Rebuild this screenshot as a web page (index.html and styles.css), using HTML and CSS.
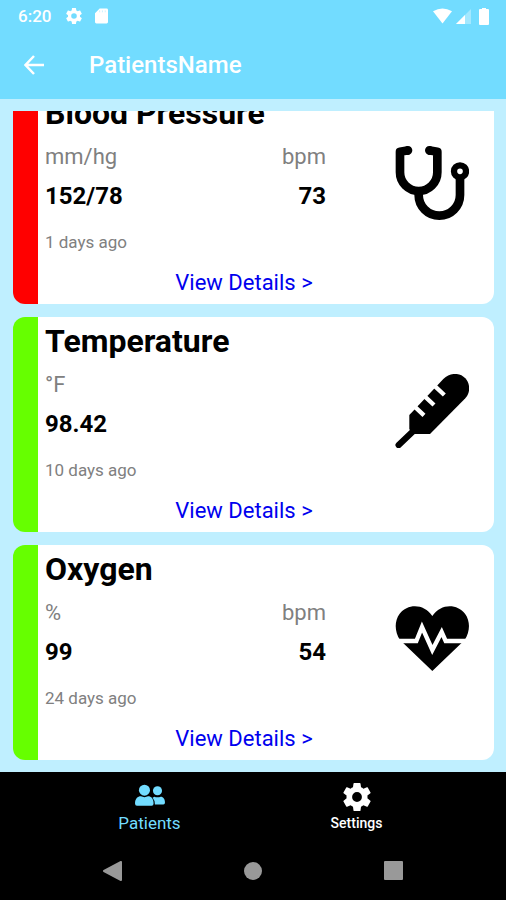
FILE: index.html
```
<!DOCTYPE html>
<html lang="en">
<head>
    <meta charset="UTF-8">
    <meta name="viewport" content="width=device-width, initial-scale=1.0">
    <title>PatientsName</title>
    <link rel="stylesheet" href="styles.css">
</head>
<body>
    <svg class="defs" aria-hidden="true">
        <symbol id="gear" viewBox="2 2 20 20">
            <path d="M12 15.5A3.5 3.5 0 0 1 8.5 12 3.5 3.5 0 0 1 12 8.5a3.5 3.5 0 0 1 3.5 3.5 3.5 3.5 0 0 1-3.5 3.5m7.43-2.53c.04-.32.07-.64.07-.97s-.03-.66-.07-1l2.11-1.63c.19-.15.24-.42.12-.64l-2-3.46c-.12-.22-.39-.31-.61-.22l-2.49 1c-.52-.39-1.06-.73-1.69-.98l-.37-2.65A.506.506 0 0 0 14 2h-4c-.25 0-.46.18-.5.42l-.37 2.65c-.63.25-1.17.59-1.69.98l-2.49-1c-.22-.09-.49 0-.61.22l-2 3.46c-.13.22-.07.49.12.64L4.57 11c-.04.34-.07.67-.07 1s.03.65.07.97l-2.11 1.66c-.19.15-.25.42-.12.64l2 3.46c.12.22.39.3.61.22l2.49-1.01c.52.4 1.06.74 1.69.99l.37 2.65c.04.24.25.42.5.42h4c.25 0 .46-.18.5-.42l.37-2.65c.63-.26 1.17-.59 1.69-.99l2.49 1.01c.22.08.49 0 .61-.22l2-3.46c.12-.22.07-.49-.12-.64z"/>
        </symbol>
    </svg>

    <div class="app">
        <header class="header">
            <div class="status-bar">
                <span class="time">6:20</span>
                <svg class="status-gear" width="16" height="16"><use href="#gear"/></svg>
                <svg class="status-sd" width="13" height="16" viewBox="0 0 14 16"><path d="M5 0h7.500a1.500 1.500 0 0 1 1.500 1.500v13a1.500 1.500 0 0 1-1.500 1.500h-11A1.500 1.500 0 0 1 0 14.500V5z"/><path d="M5 2v2M8 2v2M11 2v2" stroke="#72dcff" stroke-opacity=".4"/></svg>
                <svg class="status-wifi" width="19" height="16" viewBox="0 0 20 16"><path d="M0 3Q10-3 20 3L10 16z"/></svg>
                <svg class="status-signal" width="15" height="15" viewBox="0 0 15 15"><path d="M15 0v15H0z" opacity=".35"/><path d="M9 6v9H0z"/></svg>
                <svg width="10" height="17" viewBox="0 0 10 17"><path d="M3 0h4v1h2a1 1 0 0 1 1 1v14a1 1 0 0 1-1 1H1a1 1 0 0 1-1-1V2a1 1 0 0 1 1-1h2z"/></svg>
            </div>
            <div class="title-bar">
                <button class="back-button" aria-label="Back">
                    <svg width="20" height="20" viewBox="0 0 20 20"><path d="M20 10H2M10 1L1.500 10l8.500 9" fill="none" stroke="#fff" stroke-width="2.500"/></svg>
                </button>
                <h1>PatientsName</h1>
            </div>
        </header>

        <main class="content">
            <div class="card-list" id="card-list">
                <article class="card alert">
                    <div class="card-body">
                        <div class="readings">
                            <h2>Blood Pressure</h2>
                            <div class="row units"><span>mm/hg</span><span>bpm</span></div>
                            <div class="row values"><span>152/78</span><span>73</span></div>
                            <p class="age">1 days ago</p>
                        </div>
                        <svg class="card-icon" viewBox="45 48 222 222">
                            <g fill="none" stroke="#000" stroke-width="26" stroke-linejoin="round">
                                <path d="M86 61L60 65V127a56 56 0 0 0 112 0V65L146 61"/>
                                <path d="M84 61L83 62M148 61L149 62" stroke-linecap="round"/>
                                <path d="M116 186v9a62 62 0 0 0 124 0V135"/>
                                <circle cx="240" cy="124" r="18" stroke-width="19"/>
                            </g>
                        </svg>
                        <a href="#" class="details">View Details &gt;</a>
                    </div>
                </article>

                <article class="card normal">
                    <div class="card-body">
                        <div class="readings">
                            <h2>Temperature</h2>
                            <div class="row units"><span>°F</span></div>
                            <div class="row values"><span>98.42</span></div>
                            <p class="age">10 days ago</p>
                        </div>
                        <svg class="card-icon" viewBox="45 39 222 222">
                            <path d="M88 162L190 54C210 34 240 34 256 52C271 69 272 94 256 112L150 219H103L88 205z"/>
                            <path d="M56 252L104 206" stroke="#000" stroke-width="19" stroke-linecap="round"/>
                            <path d="M100 133L132 163M131 103L162 132M162 73L193 102" stroke="#fff" stroke-width="13"/>
                        </svg>
                        <a href="#" class="details">View Details &gt;</a>
                    </div>
                </article>

                <article class="card normal">
                    <div class="card-body">
                        <div class="readings">
                            <h2>Oxygen</h2>
                            <div class="row units"><span>%</span><span>bpm</span></div>
                            <div class="row values"><span>99</span><span>54</span></div>
                            <p class="age">24 days ago</p>
                        </div>
                        <svg class="card-icon" viewBox="45 36 222 222">
                            <path d="M157 243L60 150C44 126 42 94 59 71C83 40 132 40 157 78C182 40 231 40 255 71C272 94 270 126 254 150z"/>
                            <path d="M40 153H109L126 111L157 180L185 126L197 153H275" fill="none" stroke="#fff" stroke-width="13"/>
                        </svg>
                        <a href="#" class="details">View Details &gt;</a>
                    </div>
                </article>
            </div>
        </main>

        <nav class="tabs">
            <a href="#" class="tab active">
                <svg width="30" height="28" viewBox="403 66 92 86"><circle cx="432" cy="88" r="17"/><path d="M403 129c0-14 8-22 18-22q11 5 22 0c10 0 17 8 17 22q0 7-6 7h-45q-6 0-6-7z"/><circle cx="472" cy="90" r="14"/><path d="M457 111l5-3q10 4 20 0c8 0 13 8 13 18q0 6-5 6h-26q1-12-7-21z"/></svg>
                <span>Patients</span>
            </a>
            <a href="#" class="tab">
                <svg width="28" height="28"><use href="#gear"/></svg>
                <span>Settings</span>
            </a>
        </nav>

        <div class="system-nav">
            <button aria-label="Back"><svg width="20" height="20" viewBox="0 0 20 20"><path d="M19 1v18L2 10z" stroke-width="2" stroke="#999" stroke-linejoin="round"/></svg></button>
            <button aria-label="Home"><svg width="20" height="20" viewBox="0 0 20 20"><circle cx="10" cy="10" r="9"/></svg></button>
            <button aria-label="Recent apps"><svg width="20" height="20" viewBox="0 0 20 20"><rect width="19" height="19" rx="1"/></svg></button>
        </div>
    </div>

    <script>
        const list = document.getElementById('card-list');
        list.scrollTop = list.scrollHeight;
    </script>
</body>
</html>
```
FILE: styles.css
```
* {
    box-sizing: border-box;
}

body {
    margin: 0;
    font-family: Roboto, "Liberation Sans", sans-serif;
    background-color: #bfefff;
}

h1, h2, p {
    margin: 0;
}

svg {
    display: block;
    flex-shrink: 0;
}

button {
    display: flex;
    padding: 0;
    border: none;
    background: none;
    cursor: pointer;
}

a {
    text-decoration: none;
}

.defs {
    display: none;
}

.app {
    display: flex;
    flex-direction: column;
    height: 100vh;
}

.header {
    background-color: #72dcff;
    color: white;
    padding-bottom: 1px;
}

.status-bar {
    display: flex;
    align-items: center;
    height: 32px;
    padding: 0 17px 0 18px;
    fill: white;
}

.time {
    font-size: 17px;
    font-weight: 500;
}

.status-gear {
    margin-left: 15px;
}

.status-sd {
    margin-left: 13px;
}

.status-wifi {
    margin-left: auto;
}

.status-signal {
    margin: 0 8px 0 4px;
}

.title-bar {
    display: flex;
    align-items: center;
    gap: 45px;
    height: 66px;
    padding: 0 24px;
}

.title-bar h1 {
    font-size: 24px;
    font-weight: 500;
}

.content {
    flex: 1;
    min-height: 0;
    display: flex;
    padding: 12px 12px 12px 13px;
}

.card-list {
    flex: 1;
    display: flex;
    flex-direction: column;
    gap: 13px;
    overflow-y: auto;
    scrollbar-width: none;
}

.card {
    flex-shrink: 0;
    background-color: white;
    border-left: 25px solid;
    border-radius: 12px;
}

.alert {
    border-color: #ff0000;
}

.normal {
    border-color: #66ff00;
}

.card-body {
    display: grid;
    grid-template-columns: 1fr 143px;
    padding: 5px 25px 8px 7px;
}

.readings h2 {
    font-size: 32px;
    font-weight: bold;
    line-height: 38px;
    white-space: nowrap;
}

.row {
    display: flex;
    justify-content: space-between;
}

.units {
    margin-top: 12px;
    font-size: 22px;
    line-height: 26px;
    color: #808080;
}

.values {
    margin-top: 10px;
    font-size: 24px;
    font-weight: bold;
    line-height: 32px;
}

.age {
    margin-top: 20px;
    font-size: 17px;
    line-height: 20px;
    color: #808080;
}

.card-icon {
    width: 74px;
    height: 74px;
    margin-top: 52px;
    justify-self: end;
}

.details {
    grid-column: 1 / 3;
    justify-self: center;
    margin: 18px 26px 0 0;
    font-size: 22px;
    line-height: 26px;
    color: #0000ee;
}

.tabs {
    display: flex;
    height: 70px;
    padding: 0 46px;
    background-color: black;
}

.tab {
    flex: 1;
    display: flex;
    flex-direction: column;
    align-items: center;
    padding-top: 11px;
    font-size: 14px;
    font-weight: 500;
    line-height: 24px;
    color: white;
    fill: white;
}

.tab.active {
    font-size: 17px;
    font-weight: normal;
    color: #72dcff;
    fill: #72dcff;
}

.system-nav {
    display: flex;
    height: 58px;
    padding: 0 42px;
    background-color: black;
    fill: #999;
}

.system-nav button {
    flex: 1;
    align-items: center;
    justify-content: center;
}
```
